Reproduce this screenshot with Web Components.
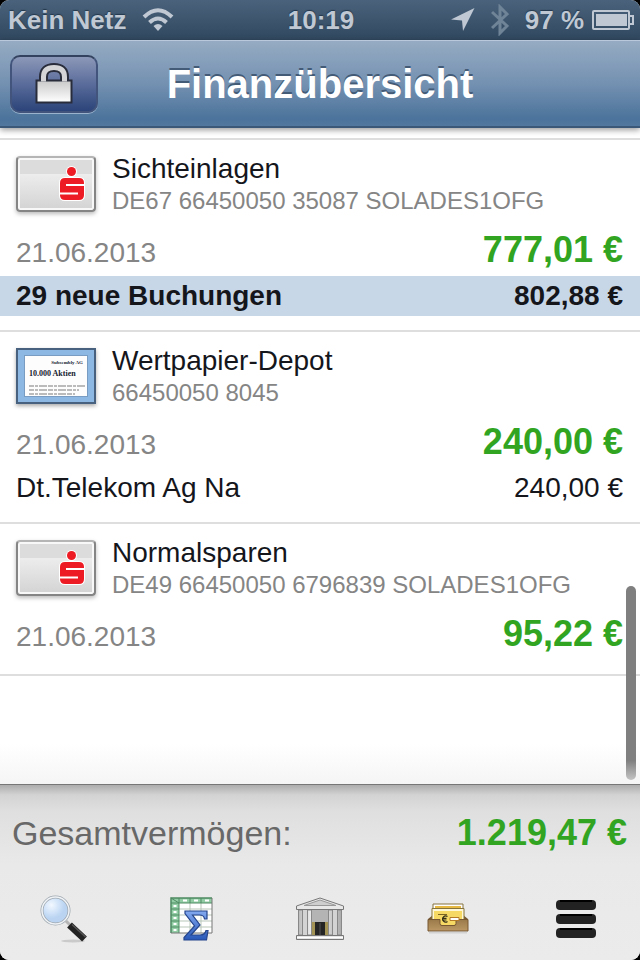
<!DOCTYPE html>
<html lang="de">
<head>
<meta charset="utf-8">
<meta name="viewport" content="width=device-width, initial-scale=1">
<title>Finanzübersicht</title>
<style>
  html { background: #000; }
  body { margin: 0; font-family: "Liberation Sans", Arial, sans-serif; color: #14161c; }
</style>
</head>
<body>
<finance-app></finance-app>
<script>
const define = (name, html, setup) => {
  const template = document.createElement('template');
  template.innerHTML = html;
  customElements.define(name, class extends HTMLElement {
    connectedCallback() {
      if (this.shadowRoot) return;
      this.attachShadow({ mode: 'open' }).append(template.content.cloneNode(true));
      if (setup) setup(this, this.shadowRoot);
    }
  });
};

define('status-bar', `
<style>
  :host { display: grid; grid-template-columns: 1fr auto 1fr; align-items: center; height: 40px; padding: 0 6px 0 8px;
    box-sizing: border-box; background: linear-gradient(#4a627b, #30485f); color: #bfc8d3;
    font-size: 26px; font-weight: bold; line-height: 40px; text-shadow: 0 -1px 1px #24384c; }
  .side { display: flex; align-items: center; gap: 16px; white-space: nowrap; }
  .right { justify-content: flex-end; }
  .power { display: flex; align-items: center; gap: 8px; }
  svg { display: block; flex: none; }
</style>
<div class="side"><span>Kein Netz</span>
  <svg width="32" height="24" viewBox="0 0 32 24" fill="none" stroke="#bfc8d3" stroke-width="4">
    <path d="M2 9Q16-4.500 30 9M7.500 14.500Q16 6.500 24.500 14.500"/><path d="M16 23l-4.500-5q4.500-4 9 0z" fill="#bfc8d3" stroke="none"/></svg>
</div>
<time>10:19</time>
<div class="side right">
  <svg width="24" height="24" viewBox="0 0 24 24"><path d="M23.500 0L12 23l-1-10.500L0 11.500z" fill="#bfc8d3"/></svg>
  <svg width="18" height="32" viewBox="0 0 18 32"><path d="M1 8l15 14-7 7V3l7 7L1 24" fill="none" stroke="#6f8497" stroke-width="3"/></svg>
  <span class="power"><span>97 %</span>
    <svg width="42" height="20" viewBox="0 0 42 20"><rect x="1" y="1" width="36" height="18" rx="1" fill="none" stroke="#bfc8d3" stroke-width="2"/><path d="M4 4h31v12H4z" fill="#bfc8d3"/><path d="M37 6h4v8h-4" fill="none" stroke="#bfc8d3" stroke-width="2"/></svg>
  </span>
</div>`);

define('nav-bar', `
<style>
  :host { display: grid; grid-template-columns: 88px 1fr 88px; align-items: center; height: 88px; padding: 0 10px;
    box-sizing: border-box; position: relative; z-index: 1; border-top: 1px solid #b9c9db; border-bottom: 2px solid #3b5878;
    background: linear-gradient(#96abc3, #7491b1 50%, #4b739b 92%, #53789f); box-shadow: 0 2px 6px #0006; }
  h1 { margin: 0; text-align: center; font-size: 40px; line-height: 48px; color: #fff; text-shadow: 0 -2px 0 #435b76; white-space: nowrap; }
  button { height: 58px; padding: 0; display: grid; place-items: center; border: 2px solid #42547b; border-top-color: #33435f; border-radius: 10px;
    background: linear-gradient(#8c98b8, #5a6c9b 50%, #2b4479); box-shadow: 0 1px 0 #9bb3cd; }
</style>
<button type="button" aria-label="Sperren">
  <svg width="38" height="42" viewBox="0 0 38 42"><defs><linearGradient id="g" x2="0" y2="1"><stop stop-color="#c9c9ca"/><stop offset="1" stop-color="#fff"/></linearGradient></defs>
    <path d="M8.500 18v-4q0-9.500 10.500-9.500T29.500 14v4" fill="none" stroke="#292d3b" stroke-width="9"/>
    <path d="M1.500 17.500h35v22h-35z" fill="url(#g)" stroke="#292d3b" stroke-width="2"/>
    <path d="M8.500 18.500V14q0-9.500 10.500-9.500T29.500 14v4.500" fill="none" stroke="#d5d5d7" stroke-width="5"/></svg>
</button>
<h1>Finanzübersicht</h1>`);

define('bank-card', `
<style>
  :host { display: block; box-sizing: border-box; width: 80px; height: 56px; border: 2px solid #858585; border-top-color: #b5b5b5; border-radius: 4px;
    background: linear-gradient(#dcdcdc 0 30%, #ededed 30%, #d3d3d3); box-shadow: inset 0 0 0 2px #f8f8f8, 0 2px 4px #0004; }
  svg { display: block; }
</style>
<svg width="76" height="52" viewBox="2 2 76 52">
  <g stroke="#fff" stroke-width="2" paint-order="stroke" fill="#ed1c24"><circle cx="55.500" cy="15.500" r="4.500"/>
  <path d="M49 22h14q5 0 5 5v12q0 5-5 5H49q-5 0-5-5V27q0-5 5-5z"/></g>
  <path d="M69 29H50M43 37.500H62" fill="none" stroke="#fff" stroke-width="2"/>
</svg>`);

define('share-certificate', `
<style>
  :host { display: block; box-sizing: border-box; width: 80px; height: 56px; padding: 5px 6px; border: 2px solid #47617f; background: #8db8e4; box-shadow: 0 2px 4px #0005; }
  div { box-sizing: border-box; height: 42px; padding: 3px 4px 0; background: #fdfdfd; border: 1px solid #789cc2; font-family: "Liberation Serif", serif; color: #151b30; white-space: nowrap; overflow: hidden; }
  b, strong { display: block; }
  b { font-size: 5px; line-height: 8px; text-align: right; }
  strong { font-size: 8px; line-height: 14px; }
</style>
<div><b>Subsembly AG</b><strong>10.000 Aktien</strong><svg width="56" height="11" viewBox="0 0 56 11" stroke="#bbb" stroke-width="2"><path d="M0 2h56M0 6h50M0 10h46" stroke-dasharray="5 1 3 1 8 1"/></svg></div>`);

define('account-item', `
<style>
  :host { display: block; padding: 13px 0 14px; border-top: 2px solid #dedede; }
  header { display: flex; gap: 16px; padding: 0 16px; }
  slot[name=icon] { display: block; padding-top: 3px; }
  h2 { margin: 0; font-size: 28px; line-height: 32px; font-weight: normal; }
  p { margin: 0; font-size: 24px; line-height: 32px; color: #858585; white-space: nowrap; }
  .balance { display: flex; justify-content: space-between; align-items: baseline; box-sizing: border-box; height: 59px;
    padding: 7px 17px 0 16px; line-height: 52px; font-size: 28px; color: #858585; }
  .balance strong { font-size: 36px; color: #31a522; }
</style>
<header><slot name="icon"></slot><div><h2></h2><p></p></div></header>
<div class="balance"><time></time><strong></strong></div>
<slot></slot>`, (el, root) => {
  root.querySelector('h2').textContent = el.getAttribute('name');
  root.querySelector('p').textContent = el.getAttribute('number');
  root.querySelector('time').textContent = el.getAttribute('date');
  root.querySelector('strong').textContent = el.getAttribute('balance');
});

define('detail-row', `
<style>
  :host { display: flex; justify-content: space-between; padding: 0 17px 0 16px; font-size: 28px; line-height: 40px; }
  :host([highlight]) { background: #c8d7e7; font-weight: bold; }
</style>
<slot></slot>`);

define('account-list', `
<style>
  :host { display: block; position: relative; flex: 1; padding-top: 10px; background: linear-gradient(#fff calc(100% - 40px), #f5f5f5); }
  .end { border-top: 2px solid #dedede; }
  .thumb { position: absolute; right: 4px; bottom: 4px; width: 10px; height: 194px; border-radius: 5px; background: linear-gradient(#7f7f7f 90%, #c4c4c4); }
</style>
<slot></slot><div class="end"></div><div class="thumb"></div>`);

define('total-bar', `
<style>
  :host { display: flex; justify-content: space-between; align-items: baseline; padding: 20px 13px 16px 12px; line-height: 56px; font-size: 34px; color: #686868; }
  strong { font-size: 36px; color: #31a522; }
</style>
<span>Gesamtvermögen:</span><strong><slot></slot></strong>`);

define('tab-bar', `
<style>
  :host { display: block; }
  nav { display: grid; grid-template-columns: repeat(5, 1fr); height: 83px; }
  button { display: grid; place-items: center; padding: 0; border: 0; background: none; }
  svg { display: block; }
</style>
<nav>
<button type="button" aria-label="Suchen"><svg width="48" height="48" viewBox="0 0 48 48">
  <defs><radialGradient id="l" cx=".35" cy=".3"><stop stop-color="#f2f8ff"/><stop offset=".6" stop-color="#cfe2f8"/><stop offset="1" stop-color="#b9d3f1"/></radialGradient></defs>
  <ellipse cx="33" cy="46" rx="12" ry="1.500" fill="#aaa" opacity=".5"/>
  <path d="M26 26l6 6" stroke="#b5b5b5" stroke-width="3"/>
  <path d="M29.500 30l15 14" stroke="#222" stroke-width="7"/><path d="M32 29.500l13.500 12.500" stroke="#555" stroke-width="1.500"/>
  <circle cx="15.500" cy="15.500" r="13.500" fill="url(#l)" stroke="#9fa8b0" stroke-width="3"/><circle cx="15.500" cy="15.500" r="13.500" fill="none" stroke="#f1f4f7" stroke-width="1.500"/></svg></button>
<button type="button" aria-label="Auswertung"><svg width="44" height="44" viewBox="0 0 44 44">
  <defs><linearGradient id="s" x2="0" y2="1"><stop stop-color="#83a9f0"/><stop offset="1" stop-color="#2857b8"/></linearGradient></defs>
  <path d="M1 1h41v35H1z" fill="#fff"/><path d="M1 1h41v5H1zM1 1h8v35H1z" fill="#92cda6"/>
  <path d="M9 12h33M9 18h33M9 24h33M9 30h33M20 6v30M31 6v30" stroke="#b9c6b9"/>
  <path d="M1 12h8M1 18h8M1 24h8M1 30h8M1 6h41M9 1v35M20 1v5M31 1v5M1 1l8 5" stroke="#4e8a62"/>
  <path d="M3.500 9h3M3.500 15h3M3.500 21h3M3.500 27h3M3.500 33h3M13 3.500h4M24 3.500h4M35 3.500h4" stroke="#fff" stroke-width="2"/>
  <path d="M1 36V1h41" fill="none" stroke="#4e8a62" stroke-width="1.500"/><path d="M42 1v35H1" fill="none" stroke="#777"/>
  <path d="M15 14h22v8h-2.500q-.5-4-5-4H22.500l7.500 10-9 10h9q5 0 6-4.500h2L36.500 43H14v-2.500L24.500 29 15 16.500z" fill="url(#s)" stroke="#25458c" stroke-width="1.200"/></svg></button>
<button type="button" aria-label="Banken"><svg width="48" height="44" viewBox="0 0 48 44">
  <defs><linearGradient id="b"><stop stop-color="#bbb"/><stop offset=".4" stop-color="#fff"/><stop offset="1" stop-color="#aaa"/></linearGradient></defs>
  <path d="M4 12h40v26H4z" fill="#d3d3d3"/><path d="M15 13h18v12H15z" fill="#b4b4b4"/><path d="M16 25h16v13H16z" fill="#a39456"/><path d="M19 25h10v13H19z" fill="#252525"/><path d="M24 26v12" stroke="#555"/>
  <g stroke="#888" fill="url(#b)"><path d="M2.500 13h4v25h-4zM11.500 13h4v25h-4zM32.500 13h4v25h-4zM41.500 13h4v25h-4z"/></g>
  <path d="M.5 9L24 1l23.500 8v3.500H.5z" fill="#e9e9e9" stroke="#777"/><path d="M8 8.500L24 3l16 5.500z" fill="#cfcfcf" stroke="#999"/>
  <path d="M.5 38.500h47v4H.5z" fill="#e5e5e5" stroke="#777"/><path d="M1 40.500h46" stroke="#fff"/></svg></button>
<button type="button" aria-label="Aufträge"><svg width="42" height="32" viewBox="0 0 42 32">
  <defs><linearGradient id="t" x2="0" y2="1"><stop stop-color="#9b7a4a"/><stop offset="1" stop-color="#bb9864"/></linearGradient></defs>
  <path d="M1 16l5-4h30l5 4v10H1z" fill="#745633"/><path d="M6 1h30v18H6z" fill="#fff" stroke="#86733c"/><path d="M8 3h26v4H8z" fill="#e7bb43"/>
  <path d="M5 5.500h32v16H5z" fill="#fff8d8" stroke="#86733c"/><path d="M7 8h28v14H7z" fill="#f6d965"/><path d="M11 11.500h9" stroke="#7b6521"/>
  <path d="M1 16.500h12v4q0 2 2 2h12q2 0 2-2v-4h12V28H1z" fill="url(#t)" stroke="#765732"/>
  <path d="M23 14.500h9v3h-9z" fill="#fff" stroke="#b57b27"/><path d="M20.500 13.600A3 3 0 1 0 20.500 18.400M15 15.300h4.500M15 17h4.500" fill="none" stroke="#353018" stroke-width="1.200"/>
  <path d="M2 29.500h38" stroke="#bbb" stroke-width="2" opacity=".5"/></svg></button>
<button type="button" aria-label="Menü"><svg width="40" height="38" viewBox="0 0 40 38"><g fill="#222"><rect width="40" height="10" rx="4"/><rect y="14" width="40" height="10" rx="4"/><rect y="28" width="40" height="10" rx="4"/></g><path d="M4 1h32M4 15h32M4 29h32" stroke="#000" stroke-width="2"/></svg></button>
</nav>`);

define('finance-app', `
<style>
  :host { display: flex; flex-direction: column; min-height: 100vh; overflow: hidden; border-radius: 9px; background: #eee; }
  footer { border-top: 1px solid #777; background: linear-gradient(#adadad, #d3d3d3 10px, #dfdfdf 26px, #e9e9e9 80px, #ebebeb); }
</style>
<status-bar></status-bar>
<nav-bar></nav-bar>
<account-list>
  <account-item name="Sichteinlagen" number="DE67 66450050 35087 SOLADES1OFG" date="21.06.2013" balance="777,01 €">
    <bank-card slot="icon"></bank-card>
    <detail-row highlight><span>29 neue Buchungen</span><span>802,88 €</span></detail-row>
  </account-item>
  <account-item name="Wertpapier-Depot" number="66450050 8045" date="21.06.2013" balance="240,00 €">
    <share-certificate slot="icon"></share-certificate>
    <detail-row><span>Dt.Telekom Ag Na</span><span>240,00 €</span></detail-row>
  </account-item>
  <account-item name="Normalsparen" number="DE49 66450050 6796839 SOLADES1OFG" date="21.06.2013" balance="95,22 €">
    <bank-card slot="icon"></bank-card>
  </account-item>
</account-list>
<footer><total-bar>1.219,47 €</total-bar><tab-bar></tab-bar></footer>`);
</script>
</body>
</html>
